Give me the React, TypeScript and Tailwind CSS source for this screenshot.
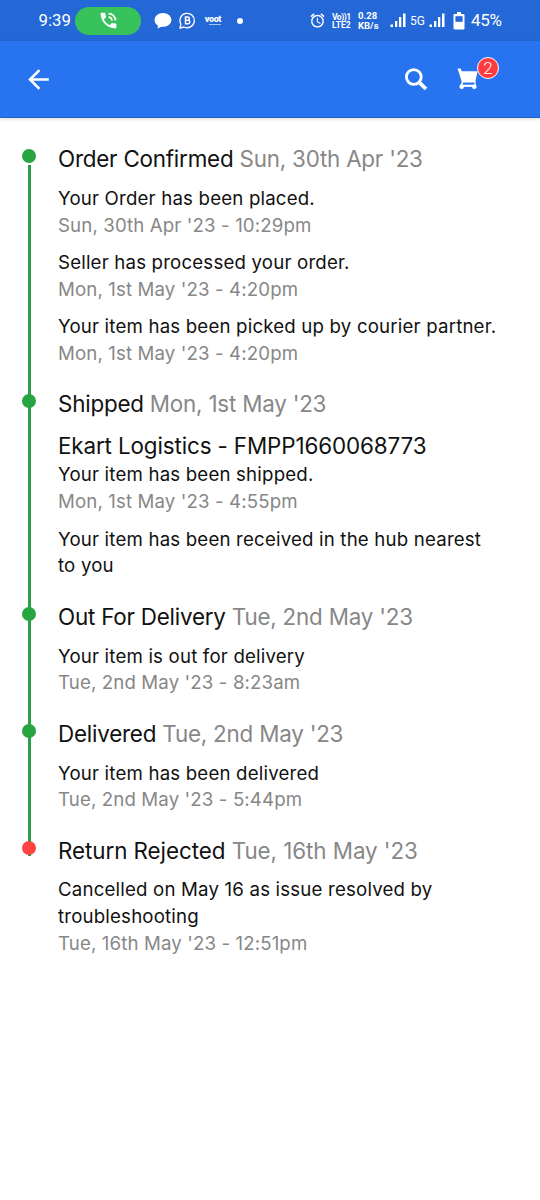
import React from 'react';
import { MdAccessAlarm, MdArrowBack, MdPhoneInTalk } from 'react-icons/md';

interface Update {
  text: string;
  time?: string;
}

interface OrderEvent {
  title: string;
  date: string;
  carrier?: string;
  updates: Update[];
  rejected?: boolean;
}

const events: OrderEvent[] = [
  {
    title: 'Order Confirmed',
    date: "Sun, 30th Apr '23",
    updates: [
      { text: 'Your Order has been placed.', time: "Sun, 30th Apr '23 - 10:29pm" },
      { text: 'Seller has processed your order.', time: "Mon, 1st May '23 - 4:20pm" },
      { text: 'Your item has been picked up by courier partner.', time: "Mon, 1st May '23 - 4:20pm" },
    ],
  },
  {
    title: 'Shipped',
    date: "Mon, 1st May '23",
    carrier: 'Ekart Logistics - FMPP1660068773',
    updates: [
      { text: 'Your item has been shipped.', time: "Mon, 1st May '23 - 4:55pm" },
      { text: 'Your item has been received in the hub nearest to you' },
    ],
  },
  {
    title: 'Out For Delivery',
    date: "Tue, 2nd May '23",
    updates: [{ text: 'Your item is out for delivery', time: "Tue, 2nd May '23 - 8:23am" }],
  },
  {
    title: 'Delivered',
    date: "Tue, 2nd May '23",
    updates: [{ text: 'Your item has been delivered', time: "Tue, 2nd May '23 - 5:44pm" }],
  },
  {
    title: 'Return Rejected',
    date: "Tue, 16th May '23",
    rejected: true,
    updates: [
      { text: 'Cancelled on May 16 as issue resolved by troubleshooting', time: "Tue, 16th May '23 - 12:51pm" },
    ],
  },
];

const ChatIcon = () => (
  <svg width="18" height="18" viewBox="0 0 18 18" fill="white">
    <path d="M9 1C4.300 1 .6 4 .6 7.900c0 2.300 1.300 4.300 3.300 5.500L3.500 16.600l4-1.900c.5.1 1 .1 1.500.1 4.700 0 8.400-3.100 8.400-6.900S13.700 1 9 1z" />
  </svg>
);

const BusinessIcon = () => (
  <svg width="17" height="17" viewBox="0 0 17 17" fill="none" stroke="white">
    <path d="M1 16l.9-3.900A7.200 7.200 0 1 1 5 15z" strokeWidth="1.300" />
    <path d="M6.500 5h2.300a1.600 1.600 0 0 1 0 3.300H6.500zM6.500 8.300h2.600a1.700 1.700 0 0 1 0 3.400H6.500z" strokeWidth="1.500" />
  </svg>
);

const SignalIcon = () => (
  <svg width="16" height="15" viewBox="0 0 16 15" fill="white">
    <rect x="0.500" y="11.500" width="2.500" height="2.500" />
    <rect x="5" y="8" width="2.300" height="6" />
    <rect x="9" y="4" width="2.300" height="10" />
    <rect x="13" y="0.500" width="2.500" height="13.500" />
  </svg>
);

const BatteryIcon = () => (
  <svg width="12" height="18" viewBox="0 0 12 18">
    <path d="M4 0h4v2h2.500a1 1 0 0 1 1 1v13.500a1 1 0 0 1-1 1h-9a1 1 0 0 1-1-1V3a1 1 0 0 1 1-1H4z" fill="white" />
    <rect x="2.400" y="4.200" width="7.200" height="5.600" fill="#2467d6" />
  </svg>
);

const SearchIcon = () => (
  <svg width="24" height="24" viewBox="0 0 24 24" fill="none" stroke="white">
    <circle cx="9.800" cy="10" r="7.400" strokeWidth="2.800" />
    <path d="M15 15.200l7 6.800" strokeWidth="3.800" />
  </svg>
);

const CartIcon = () => (
  <svg width="22" height="22" viewBox="0 0 22 22" fill="white">
    <path d="M.5.500h3l1.400 2.800h15.700l-2.200 10a1.500 1.500 0 0 1-1.500 1.300H5.500z" />
    <path d="M2 1.200l3.600 12.500-1.300 3.500" fill="none" stroke="white" strokeWidth="1.600" />
    <path d="M4 17.800h14" stroke="white" strokeWidth="2.200" />
    <circle cx="4.700" cy="18.800" r="2.300" />
    <circle cx="17.300" cy="18.800" r="2.300" />
    <path d="M18 13v5" stroke="white" strokeWidth="1.200" />
  </svg>
);

const StatusBar = () => (
  <div className="flex h-[41px] items-center bg-[#2467d6] font-['Roboto',sans-serif] text-white">
    <span className="ml-[38.500px] w-[36.500px] text-[16.800px] leading-none">9:39</span>
    <div className="flex h-7 w-[66px] items-center justify-center rounded-full bg-[#37c25c]">
      <MdPhoneInTalk size={21} />
    </div>
    <div className="ml-[13px] flex items-center">
      <ChatIcon />
      <div className="ml-[7px]"><BusinessIcon /></div>
      <div className="ml-[7px] flex w-[18px] flex-col items-end">
        <span className="text-[9px] leading-[7px] font-black tracking-[-0.400px]">voot</span>
        <span className="mt-px h-px w-3 bg-white/60" />
      </div>
      <div className="ml-4 size-1.5 rounded-full bg-white" />
    </div>
    <div className="ml-[66px] flex items-center">
      <MdAccessAlarm size={17} />
      <div className="ml-[6px] w-[26px] text-[8.500px] leading-[8px] font-bold">
        <div className="tracking-[-0.500px]">Vo))1</div>
        <div>LTE2</div>
      </div>
      <div className="w-[32px] text-[9.500px] leading-[10px] font-bold">
        <div>0.28</div>
        <div>KB/s</div>
      </div>
      <SignalIcon />
      <span className="ml-1 w-[19px] text-[12px] leading-none">5G</span>
      <SignalIcon />
      <div className="ml-2"><BatteryIcon /></div>
      <span className="ml-[6px] text-[17px] leading-none tracking-[-0.300px]">45%</span>
    </div>
  </div>
);

const Header = () => (
  <header className="flex h-[77px] items-center border-b border-[#2562c4] bg-[#2874f0] pl-[23px] text-white shadow-[0_1px_4px_rgba(0,0,0,0.15)]">
    <MdArrowBack size={31} />
    <div className="ml-[350px]"><SearchIcon /></div>
    <div className="relative ml-[29px]">
      <CartIcon />
      <span className="absolute -top-[11px] left-[20px] flex size-[22px] items-center justify-center rounded-full border-[1.500px] border-white bg-[#ff3b3e] font-['Roboto',sans-serif] text-[17px] leading-none font-light">
        2
      </span>
    </div>
  </header>
);

const TimelineEvent: React.FC<{ event: OrderEvent; first: boolean; last: boolean }> = ({ event, first, last }) => (
  <li className="flex">
    <div className="relative mr-[22px] flex w-3.5 justify-center">
      <div className={`w-[3px] bg-[#2e9f49] ${first ? 'mt-[22px]' : ''} ${last ? 'h-[21px]' : ''}`} />
      <span className={`absolute top-[6px] left-0 size-3.5 rounded-full ${event.rejected ? 'bg-[#ff4343]' : 'bg-[#26a541]'}`} />
    </div>
    <div className="w-[442px] pb-[20.700px]">
      <h2 className={`text-[22.400px] leading-[31px] ${event.rejected ? 'tracking-[-0.060px]' : 'tracking-[-0.210px]'}`}>
        {event.title} <span className="text-[#878787]">{event.date}</span>
      </h2>
      {event.carrier && (
        <p className="mt-[10.670px] mb-[1.300px] text-[22.400px] leading-[31px] tracking-[-0.120px]">{event.carrier}</p>
      )}
      <div className={`flex flex-col gap-[10.900px] text-[18.670px] leading-[26.700px] ${event.carrier ? '' : 'mt-[11.800px]'}`}>
        {event.updates.map((update, i) => (
          <div key={i}>
            <p className="tracking-[0.180px]">{update.text}</p>
            {update.time && <p className="tracking-[0.120px] text-[#878787]">{update.time}</p>}
          </div>
        ))}
      </div>
    </div>
  </li>
);

export default function App() {
  return (
    <div className="min-h-screen bg-white font-['Inter',sans-serif] text-[#111]">
      <StatusBar />
      <Header />
      <ul className="pt-[25px] pl-[22px]">
        {events.map((event, i) => (
          <TimelineEvent key={event.title} event={event} first={i === 0} last={i === events.length - 1} />
        ))}
      </ul>
    </div>
  );
}
